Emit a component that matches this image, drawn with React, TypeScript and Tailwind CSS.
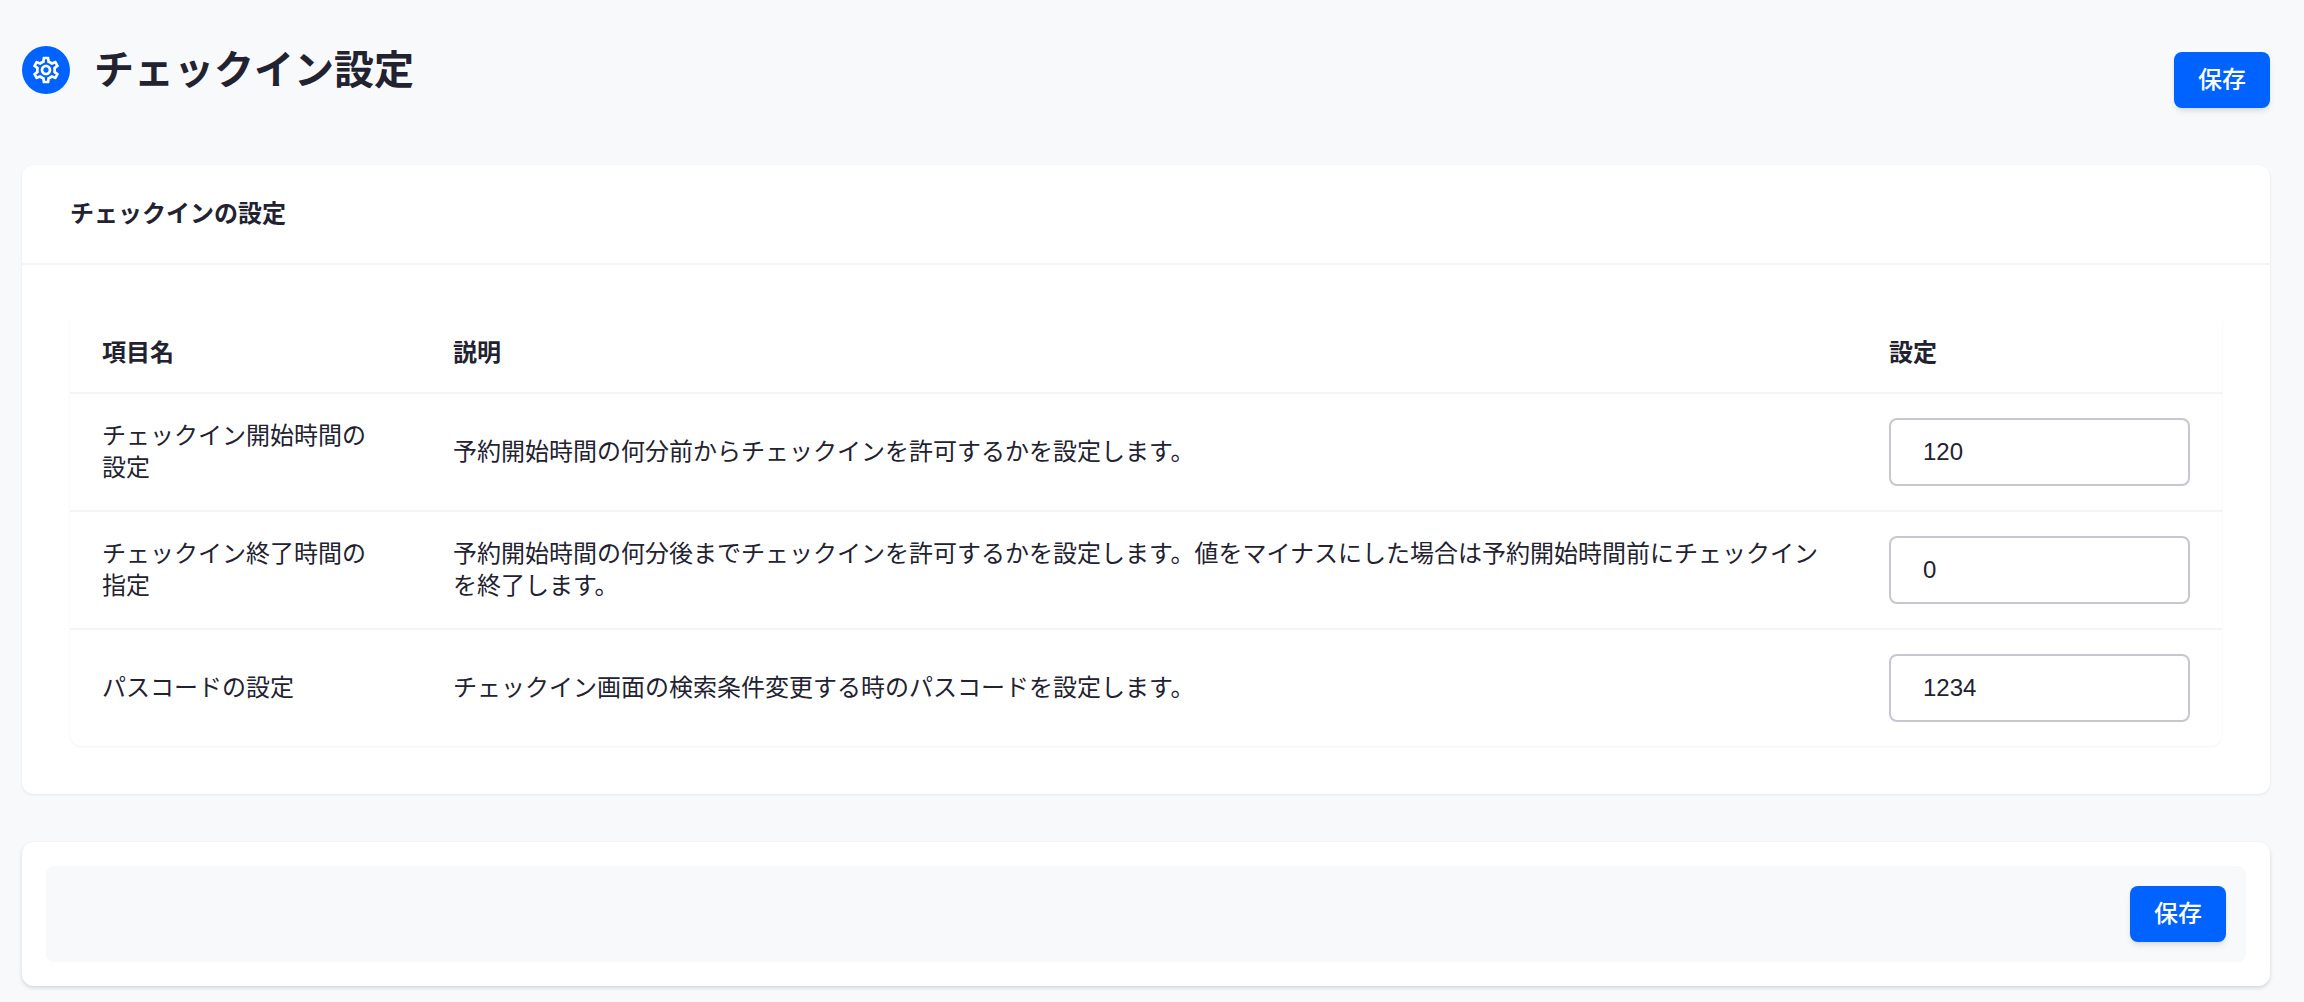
import React, { useState } from 'react';
import { MdOutlineSettings } from 'react-icons/md';

interface SettingItem {
  id: string;
  name: string;
  description: string;
  value: string;
}

const initialSettings: SettingItem[] = [
  {
    id: 'checkin-start',
    name: 'チェックイン開始時間の設定',
    description: '予約開始時間の何分前からチェックインを許可するかを設定します。',
    value: '120'
  },
  {
    id: 'checkin-end',
    name: 'チェックイン終了時間の指定',
    description:
      '予約開始時間の何分後までチェックインを許可するかを設定します。値をマイナスにした場合は予約開始時間前にチェックインを終了します。',
    value: '0'
  },
  {
    id: 'passcode',
    name: 'パスコードの設定',
    description: 'チェックイン画面の検索条件変更する時のパスコードを設定します。',
    value: '1234'
  }
];

const SaveButton: React.FC = () => (
  <button
    type="button"
    className="h-14 px-6 rounded-lg bg-[#0062ff] text-white text-[24px] leading-8 font-medium shadow-md cursor-pointer hover:bg-[#0052d6]"
  >
    保存
  </button>
);

interface SettingsTableProps {
  settings: SettingItem[];
  onChange: (id: string, value: string) => void;
}

const SettingsTable: React.FC<SettingsTableProps> = ({ settings, onChange }) => (
  <table className="w-full table-fixed border-separate border-spacing-0 rounded-xl text-left text-[24px] leading-8 shadow-[0_1px_3px_rgba(0,0,0,0.05)]">
    <thead>
      <tr className="h-[81px]">
        <th className="w-[351px] px-8 border-b-2 border-[#f4f4f5] font-bold">項目名</th>
        <th className="px-8 border-b-2 border-[#f4f4f5] font-bold">説明</th>
        <th className="w-[365px] px-8 border-b-2 border-[#f4f4f5] font-bold">設定</th>
      </tr>
    </thead>
    <tbody className="[&>tr:last-child>td]:border-b-0">
      {settings.map((item) => (
        <tr key={item.id}>
          <td className="px-8 py-6 border-b-2 border-[#f4f4f5]">
            <label htmlFor={item.id}>{item.name}</label>
          </td>
          <td className="px-8 py-6 border-b-2 border-[#f4f4f5]">{item.description}</td>
          <td className="px-8 py-6 border-b-2 border-[#f4f4f5]">
            <input
              id={item.id}
              type="text"
              value={item.value}
              onChange={(e) => onChange(item.id, e.target.value)}
              className="block w-full h-[68px] px-8 rounded-lg border-2 border-[#c7c6d1] bg-white outline-none focus:border-[#0062ff]"
            />
          </td>
        </tr>
      ))}
    </tbody>
  </table>
);

export default function App() {
  const [settings, setSettings] = useState<SettingItem[]>(initialSettings);

  const handleChange = (id: string, value: string) => {
    setSettings(settings.map((item) => (item.id === id ? { ...item, value } : item)));
  };

  return (
    <div
      lang="ja"
      className="min-h-screen bg-[#f8f9fb] pl-[22px] pr-[34px] pt-[46px] pb-4 text-[#222230] font-['Liberation_Sans','Noto_Sans_CJK_JP',sans-serif]"
    >
      <header className="flex items-start justify-between mb-[57px]">
        <div className="flex items-center gap-6">
          <span className="flex items-center justify-center w-12 h-12 rounded-full bg-[#0062ff] text-white">
            <MdOutlineSettings className="w-8 h-8" />
          </span>
          <h1 className="text-[40px] leading-[48px] font-bold">チェックイン設定</h1>
        </div>
        <div className="pt-1.5">
          <SaveButton />
        </div>
      </header>

      <main className="space-y-12">
        <section className="rounded-xl bg-white shadow-[0_1px_3px_rgba(0,0,0,0.08)]">
          <div className="flex items-center h-[100px] px-12 border-b-2 border-[#f4f4f5]">
            <h2 className="text-[24px] leading-8 font-bold">チェックインの設定</h2>
          </div>
          <div className="p-12">
            <SettingsTable settings={settings} onChange={handleChange} />
          </div>
        </section>

        <section className="p-6 rounded-xl bg-white shadow-[0_2px_4px_rgba(0,0,0,0.14)]">
          <div className="flex justify-end p-5 rounded-lg bg-[#f8f9fb]">
            <SaveButton />
          </div>
        </section>
      </main>
    </div>
  );
}
